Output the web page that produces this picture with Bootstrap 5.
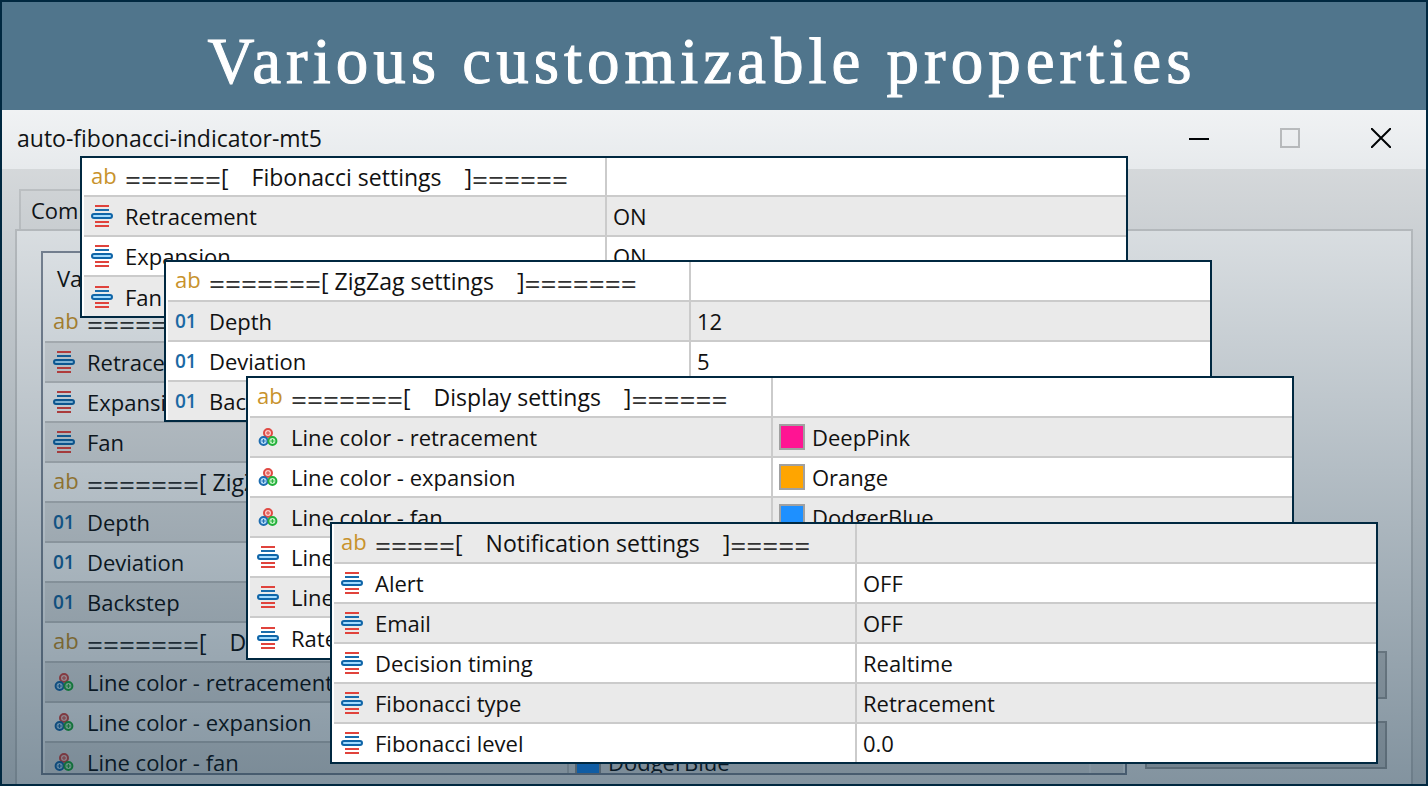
<!DOCTYPE html>
<html lang="en">
<head>
<meta charset="utf-8">
<meta name="viewport" content="width=device-width, initial-scale=1">
<title>Various customizable properties</title>
<link rel="stylesheet" href="https://cdn.jsdelivr.net/npm/bootstrap@5.3.0/dist/css/bootstrap.min.css">
<style>
  :root { --ink: #002840; }
  body { font-family: "Open Sans", "Noto Sans", sans-serif; font-size: 22px; line-height: 30px; color: #111; }
  .frame { height: 100vh; border: 2px solid var(--ink); background: #ebebeb; }
  .banner { height: 108px; background: #50758c; color: #fff; padding-right: 24px; padding-top: 10px; }
  .banner h1 { font-family: "Liberation Serif", serif; font-size: 65px; line-height: 80px; font-weight: 400; letter-spacing: 5px; -webkit-text-stroke: 1px #fff; }
  .title-bar { height: 59px; background: #fff; padding-left: 15px; }
  .title-text { font-size: 23px; padding-bottom: 4px; }
  .win-btn { width: 91px; height: 55px; border: 0; background: none; padding: 0; }
  .shade { background: linear-gradient(rgba(0,35,60,.06), rgba(0,35,60,.48)); pointer-events: none; z-index: 1; top: 108px; }
  .tab-btn { margin: 20px 0 0 17px; height: 40px; width: 110px; border: 2px solid #d2d2d2; border-bottom: 0; background: #e8e8e8; padding: 4px 10px; color: #111; text-align: left; }
  .tab-body { margin: 0 13px; border: 2px solid #cfcfcf; border-bottom: 0; background: #fafafa; padding: 20px 24px 9px; min-height: 0; }
  .list-box { border: 2px solid #868e9c; background: #fff; padding: 0 2px; margin-right: 18px; min-height: 0; }
  .scroll-strip { width: 34px; border-left: 2px solid #f6f6f6; background: #ececec; }
  .side { width: 242px; padding-bottom: 6px; gap: 22px; }
  .side-btn { height: 48px; border: 2px solid #a9a9a9; background: #d6d6d6; }

  .props { width: 100%; table-layout: fixed; border-collapse: separate; border-spacing: 0; }
  .props th, .props td { height: 40px; padding: 0 0 0 8px; border-bottom: 2px solid #cbcbcb; vertical-align: middle; font-weight: 400; white-space: nowrap; overflow: hidden; }
  .props tr > :first-child { width: calc(50% - 2px); }
  .props td + td { border-left: 2px solid #cbcbcb; padding-left: 6px; }
  .props tr.alt > td { background: #eaeaea; }
  .props thead th { height: 50px; border: 0; padding-left: 12px; }
  .panel { border: 2px solid var(--ink); background: #fff; padding-left: 2px; z-index: 2; }
  .panel .props td { padding-left: 7px; }
  .panel .props td + td { padding-left: 6px; }
  .panel .props tr:last-child td { height: 38px; border-bottom: 0; }
  .line { height: 30px; }
  .head-line { font-size: 23px; }
  .glyph { width: 22px; height: 24px; margin-right: 12px; flex: none; }
  .glyph-ab { color: #c8922c; font-size: 22px; line-height: 20px; }
  .glyph-01 { color: #1a69a4; font-size: 19px; line-height: 24px; font-weight: 600; }
  .eq { font-size: 28px; line-height: 1px; vertical-align: -4px; color: #333; }
  .swatch { width: 26px; height: 26px; border: 2px solid #a0a0a0; margin-right: 7px; }
  .pink { background: #ff1493; } .orange { background: #ffa500; } .dodger { background: #1e90ff; }
  .p-fib { top: 154px; left: 78px; right: 298px; }
  .p-fib .props tr:first-child td, .panel.p-fib .props tr:last-child td { height: 39px; }
  .p-zig { top: 258px; left: 162px; right: 214px; }
  .p-disp { top: 374px; left: 244px; right: 132px; }
  .panel.p-disp .props tr:last-child td { height: 40px; }
  .p-note { top: 520px; left: 328px; right: 48px; }
</style>
</head>
<body>
<svg width="0" height="0" class="position-absolute" aria-hidden="true">
  <symbol id="i-enum" viewBox="0 0 22 24">
    <path d="M4 2h14M4 18h14M4 22h14" stroke="#e0433c" stroke-width="2"/>
    <path d="M4 6h14" stroke="#1a6cab" stroke-width="2"/>
    <rect x="1" y="10" width="20" height="4" rx="2" fill="#a5dcff" stroke="#0f65a8" stroke-width="2"/>
  </symbol>
  <symbol id="i-color" viewBox="0 0 22 24">
    <g stroke-width="2">
      <circle cx="11" cy="8" r="4" fill="#fbd0cc" stroke="#e04a44"/>
      <circle cx="6.600" cy="16" r="4" fill="#b5dcf8" stroke="#1c6cb0"/>
      <circle cx="15.400" cy="16" r="4" fill="#c4f3c4" stroke="#22b03a"/>
    </g>
    <path d="M11 6v4M9 8h4" stroke="#e04a44"/>
    <path d="M6.600 14v4M4.600 16h4" stroke="#1c6cb0"/>
    <path d="M15.400 14v4M13.400 16h4" stroke="#22b03a"/>
  </symbol>
</svg>

<main class="frame d-flex flex-column position-relative overflow-hidden">
  <header class="banner d-flex align-items-center justify-content-center flex-shrink-0">
    <h1 class="m-0 text-nowrap">Various customizable properties</h1>
  </header>

  <div class="title-bar d-flex justify-content-between flex-shrink-0">
    <span class="title-text align-self-center">auto-fibonacci-indicator-mt5</span>
    <div class="d-flex">
      <button class="win-btn" aria-label="Minimize"><svg class="d-block mx-auto" width="20" height="20"><path d="M0 11h20" stroke="#000" stroke-width="2"/></svg></button>
      <button class="win-btn" aria-label="Maximize"><svg class="d-block mx-auto" width="20" height="20"><path d="M1 1h18v18H1z" fill="none" stroke="#c6c6c6" stroke-width="2"/></svg></button>
      <button class="win-btn" aria-label="Close"><svg class="d-block mx-auto" width="20" height="20"><path d="M0 0l20 20M20 0L0 20" stroke="#000" stroke-width="2"/></svg></button>
    </div>
  </div>

  <button class="tab-btn flex-shrink-0">Common</button>
  <section class="tab-body d-flex flex-fill">
    <div class="list-box d-flex flex-fill overflow-hidden">
      <div class="flex-fill">
        <table class="props">
          <thead><tr><th>Variable</th><th>Value</th></tr></thead>
          <tbody>
            <tr><td><div class="line head-line d-flex align-items-center"><span class="glyph glyph-ab">ab</span><span><span class="eq">======</span>[&emsp;Fibonacci settings</span></div></td><td></td></tr>
            <tr class="alt"><td><div class="line d-flex align-items-center"><svg class="glyph"><use href="#i-enum"/></svg>Retracement</div></td><td>ON</td></tr>
            <tr><td><div class="line d-flex align-items-center"><svg class="glyph"><use href="#i-enum"/></svg>Expansion</div></td><td>ON</td></tr>
            <tr class="alt"><td><div class="line d-flex align-items-center"><svg class="glyph"><use href="#i-enum"/></svg>Fan</div></td><td>ON</td></tr>
            <tr><td><div class="line head-line d-flex align-items-center"><span class="glyph glyph-ab">ab</span><span><span class="eq">=======</span>[ ZigZag settings</span></div></td><td></td></tr>
            <tr class="alt"><td><div class="line d-flex align-items-center"><span class="glyph glyph-01">01</span>Depth</div></td><td>12</td></tr>
            <tr><td><div class="line d-flex align-items-center"><span class="glyph glyph-01">01</span>Deviation</div></td><td>5</td></tr>
            <tr class="alt"><td><div class="line d-flex align-items-center"><span class="glyph glyph-01">01</span>Backstep</div></td><td>3</td></tr>
            <tr><td><div class="line head-line d-flex align-items-center"><span class="glyph glyph-ab">ab</span><span><span class="eq">=======</span>[&emsp;Display settings</span></div></td><td></td></tr>
            <tr class="alt"><td><div class="line d-flex align-items-center"><svg class="glyph"><use href="#i-color"/></svg>Line color - retracement</div></td><td></td></tr>
            <tr><td><div class="line d-flex align-items-center"><svg class="glyph"><use href="#i-color"/></svg>Line color - expansion</div></td><td></td></tr>
            <tr class="alt"><td><div class="line d-flex align-items-center"><svg class="glyph"><use href="#i-color"/></svg>Line color - fan</div></td><td><div class="line d-flex align-items-center"><span class="swatch dodger"></span>DodgerBlue</div></td></tr>
          </tbody>
        </table>
      </div>
      <div class="scroll-strip flex-shrink-0"></div>
    </div>
    <div class="side d-flex flex-column justify-content-end flex-shrink-0">
      <button class="side-btn" aria-label="Load"></button>
      <button class="side-btn" aria-label="Save"></button>
    </div>
  </section>
  <div class="shade position-absolute start-0 end-0 bottom-0"></div>

  <section class="panel p-fib position-absolute">
    <table class="props">
      <tr><td><div class="line head-line d-flex align-items-center"><span class="glyph glyph-ab">ab</span><span><span class="eq">======</span>[&emsp;Fibonacci settings&emsp;]<span class="eq">======</span></span></div></td><td></td></tr>
      <tr class="alt"><td><div class="line d-flex align-items-center"><svg class="glyph"><use href="#i-enum"/></svg>Retracement</div></td><td>ON</td></tr>
      <tr><td><div class="line d-flex align-items-center"><svg class="glyph"><use href="#i-enum"/></svg>Expansion</div></td><td>ON</td></tr>
      <tr class="alt"><td><div class="line d-flex align-items-center"><svg class="glyph"><use href="#i-enum"/></svg>Fan</div></td><td></td></tr>
    </table>
  </section>

  <section class="panel p-zig position-absolute">
    <table class="props">
      <tr><td><div class="line head-line d-flex align-items-center"><span class="glyph glyph-ab">ab</span><span><span class="eq">=======</span>[ ZigZag settings&emsp;]<span class="eq">=======</span></span></div></td><td></td></tr>
      <tr class="alt"><td><div class="line d-flex align-items-center"><span class="glyph glyph-01">01</span>Depth</div></td><td>12</td></tr>
      <tr><td><div class="line d-flex align-items-center"><span class="glyph glyph-01">01</span>Deviation</div></td><td>5</td></tr>
      <tr class="alt"><td><div class="line d-flex align-items-center"><span class="glyph glyph-01">01</span>Backstep</div></td><td></td></tr>
    </table>
  </section>

  <section class="panel p-disp position-absolute">
    <table class="props">
      <tr><td><div class="line head-line d-flex align-items-center"><span class="glyph glyph-ab">ab</span><span><span class="eq">=======</span>[&emsp;Display settings&emsp;]<span class="eq">======</span></span></div></td><td></td></tr>
      <tr class="alt"><td><div class="line d-flex align-items-center"><svg class="glyph"><use href="#i-color"/></svg>Line color - retracement</div></td><td><div class="line d-flex align-items-center"><span class="swatch pink"></span>DeepPink</div></td></tr>
      <tr><td><div class="line d-flex align-items-center"><svg class="glyph"><use href="#i-color"/></svg>Line color - expansion</div></td><td><div class="line d-flex align-items-center"><span class="swatch orange"></span>Orange</div></td></tr>
      <tr class="alt"><td><div class="line d-flex align-items-center"><svg class="glyph"><use href="#i-color"/></svg>Line color - fan</div></td><td><div class="line d-flex align-items-center"><span class="swatch dodger"></span>DodgerBlue</div></td></tr>
      <tr><td><div class="line d-flex align-items-center"><svg class="glyph"><use href="#i-enum"/></svg>Line</div></td><td></td></tr>
      <tr class="alt"><td><div class="line d-flex align-items-center"><svg class="glyph"><use href="#i-enum"/></svg>Line</div></td><td></td></tr>
      <tr><td><div class="line d-flex align-items-center"><svg class="glyph"><use href="#i-enum"/></svg>Rate</div></td><td></td></tr>
    </table>
  </section>

  <section class="panel p-note position-absolute">
    <table class="props">
      <tr class="alt"><td><div class="line head-line d-flex align-items-center"><span class="glyph glyph-ab">ab</span><span><span class="eq">=====</span>[&emsp;Notification settings&emsp;]<span class="eq">=====</span></span></div></td><td></td></tr>
      <tr><td><div class="line d-flex align-items-center"><svg class="glyph"><use href="#i-enum"/></svg>Alert</div></td><td>OFF</td></tr>
      <tr class="alt"><td><div class="line d-flex align-items-center"><svg class="glyph"><use href="#i-enum"/></svg>Email</div></td><td>OFF</td></tr>
      <tr><td><div class="line d-flex align-items-center"><svg class="glyph"><use href="#i-enum"/></svg>Decision timing</div></td><td>Realtime</td></tr>
      <tr class="alt"><td><div class="line d-flex align-items-center"><svg class="glyph"><use href="#i-enum"/></svg>Fibonacci type</div></td><td>Retracement</td></tr>
      <tr><td><div class="line d-flex align-items-center"><svg class="glyph"><use href="#i-enum"/></svg>Fibonacci level</div></td><td>0.0</td></tr>
    </table>
  </section>
</main>
<script src="https://cdn.jsdelivr.net/npm/bootstrap@5.3.0/dist/js/bootstrap.bundle.min.js"></script>
</body>
</html>
